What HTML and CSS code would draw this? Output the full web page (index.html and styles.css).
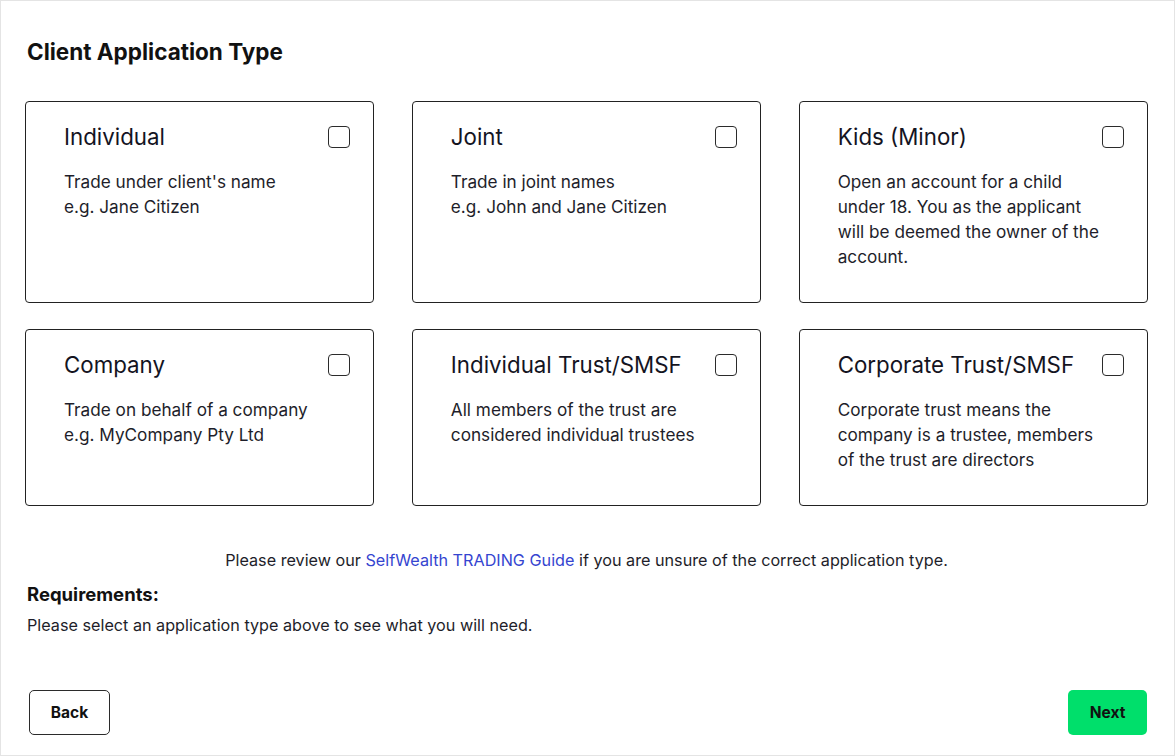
FILE: index.html
```html
<!DOCTYPE html>
<html lang="en">
<head>
<meta charset="utf-8">
<title>Client Application Type</title>
<link rel="stylesheet" href="styles.css">
</head>
<body>
<div class="page">
  <h1 class="heading">Client Application Type</h1>
  <div class="cards">
    <div class="card">
      <div class="card-head"><span class="card-title">Individual</span><span class="check"></span></div>
      <p class="card-desc">Trade under client's name<br>e.g. Jane Citizen</p>
    </div>
    <div class="card">
      <div class="card-head"><span class="card-title">Joint</span><span class="check"></span></div>
      <p class="card-desc">Trade in joint names<br>e.g. John and Jane Citizen</p>
    </div>
    <div class="card">
      <div class="card-head"><span class="card-title">Kids (Minor)</span><span class="check"></span></div>
      <p class="card-desc">Open an account for a child under 18. You as the applicant will be deemed the owner of the account.</p>
    </div>
    <div class="card">
      <div class="card-head"><span class="card-title">Company</span><span class="check"></span></div>
      <p class="card-desc">Trade on behalf of a company<br>e.g. MyCompany Pty Ltd</p>
    </div>
    <div class="card">
      <div class="card-head"><span class="card-title">Individual Trust/SMSF</span><span class="check"></span></div>
      <p class="card-desc">All members of the trust are considered individual trustees</p>
    </div>
    <div class="card">
      <div class="card-head"><span class="card-title">Corporate Trust/SMSF</span><span class="check"></span></div>
      <p class="card-desc">Corporate trust means the company is a trustee, members of the trust are directors</p>
    </div>
  </div>
  <p class="guide">Please review our <a class="guide-link" href="#">SelfWealth TRADING Guide</a> if you are unsure of the correct application type.</p>
  <h2 class="req-title">Requirements:</h2>
  <p class="req-text">Please select an application type above to see what you will need.</p>
  <div class="footer">
    <button class="btn btn-back" type="button">Back</button>
    <button class="btn btn-next" type="button">Next</button>
  </div>
</div>
</body>
</html>
```
FILE: styles.css
```css
html, body {
  margin: 0;
  padding: 0;
  background: #ffffff;
}
body {
  font-family: Inter, "Noto Sans", "Liberation Sans", sans-serif;
  color: #1b1b24;
}
.page {
  box-sizing: border-box;
  width: 1175px;
  height: 756px;
  border: 1px solid #e4e4e4;
  padding: 37px 26px 0 24px;
  display: flex;
  flex-direction: column;
}
.heading {
  margin: 0 0 0 2px;
  font-size: 22.5px;
  line-height: 28px;
  font-weight: 700;
  color: #111111;
}
.cards {
  margin-top: 35px;
  display: grid;
  grid-template-columns: repeat(3, 1fr);
  column-gap: 37.5px;
  row-gap: 26px;
}
.card {
  box-sizing: border-box;
  border: 1px solid #222222;
  border-radius: 4px;
  padding: 21px 23px 33px 38px;
}
.card-head {
  display: flex;
  justify-content: space-between;
  align-items: center;
  height: 28px;
}
.card-title {
  font-size: 22.3px;
  line-height: 28px;
  font-weight: 400;
  color: #14141f;
}
.check {
  box-sizing: border-box;
  width: 22px;
  height: 22px;
  border: 1.5px solid #2b2b2b;
  border-radius: 4px;
  flex: none;
}
.card-desc {
  margin: 18px 0 0 0;
  font-size: 17.2px;
  line-height: 25px;
  color: #1e1e2a;
  max-width: 272px;
}
.guide {
  margin: 43px 0 0 0;
  text-align: center;
  font-size: 16.2px;
  line-height: 22px;
  color: #1e1e2a;
}
.guide-link {
  color: #3545d0;
  text-decoration: none;
}
.req-title {
  margin: 11px 0 0 2px;
  font-size: 18.5px;
  line-height: 24px;
  font-weight: 700;
  color: #111111;
}
.req-text {
  margin: 8px 0 0 2px;
  font-size: 16.2px;
  line-height: 22px;
  color: #1e1e2a;
}
.footer {
  margin-top: 54px;
  display: flex;
  justify-content: space-between;
  padding: 0 1px 0 4px;
}
.btn {
  box-sizing: border-box;
  height: 45px;
  font-family: Inter, "Noto Sans", "Liberation Sans", sans-serif;
  font-size: 15.5px;
  font-weight: 700;
  color: #111111;
  border-radius: 5px;
  cursor: pointer;
}
.btn-back {
  width: 81px;
  background: #ffffff;
  border: 1px solid #2b2b2b;
}
.btn-next {
  width: 79px;
  background: #00df6b;
  border: none;
}
```
